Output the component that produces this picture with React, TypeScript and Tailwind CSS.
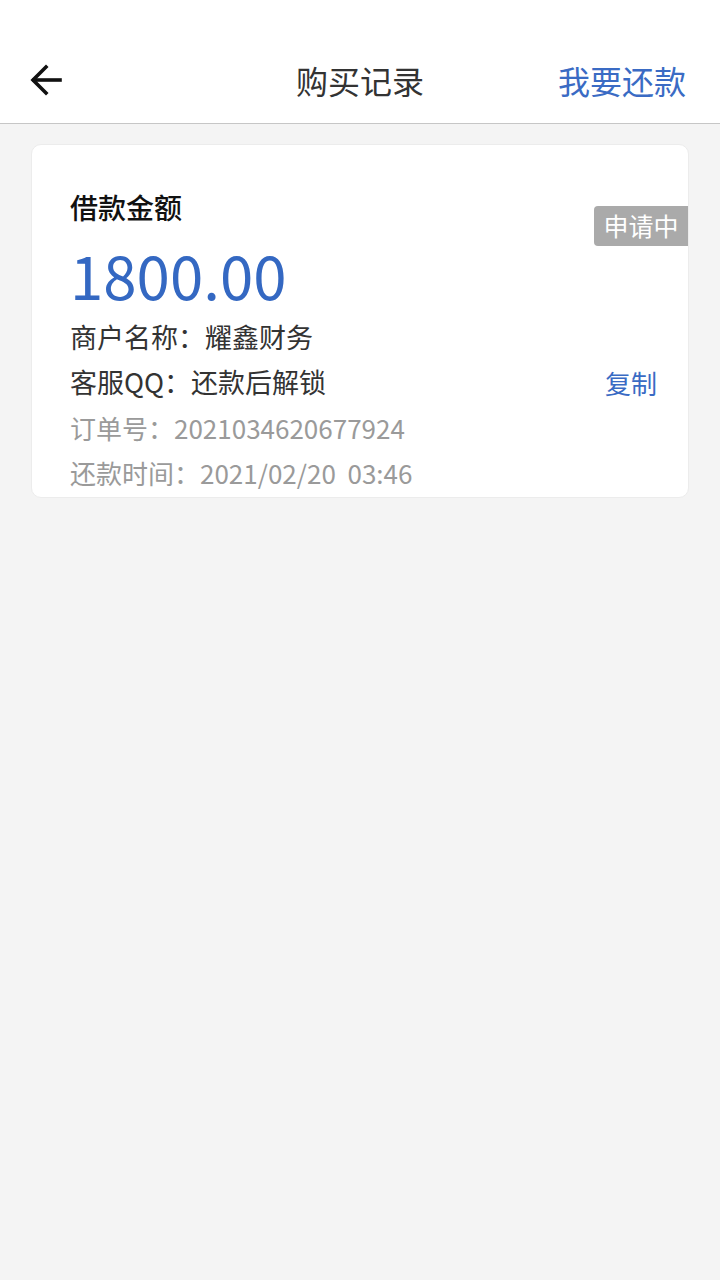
import React from "react";

const font = { fontFamily: '"Noto Sans CJK SC", "Noto Sans", sans-serif' };

const BackArrow: React.FC = () => (
  <svg width="34" height="34" viewBox="0 0 34 34" fill="none" stroke="#111" strokeWidth="3.6" strokeLinecap="square">
    <path d="M5 17 H31" />
    <path d="M17 4 L4 17 L17 30" strokeLinejoin="miter" />
  </svg>
);

const App: React.FC = () => {
  return (
    <div className="min-h-screen bg-[#f4f4f4]" style={font}>
      {/* Header */}
      <div className="h-[124px] bg-white border-b border-[#c6c6c6] pt-[44px]">
        <div className="grid h-[72px] grid-cols-[1fr_auto_1fr] items-center px-[29px]">
          <div className="flex items-center">
            <BackArrow />
          </div>
          <h1 className="text-[32px] leading-none text-[#333]">购买记录</h1>
          <div className="flex justify-end pr-[5px] text-[32px] leading-none text-[#3a6bc4]">我要还款</div>
        </div>
      </div>

      {/* Card */}
      <div className="relative mx-[31px] mt-[20px] rounded-[10px] border border-[#ececec] bg-white pl-[38px] pr-[31px] pt-[42px] pb-[2px]">
        <div className="absolute right-0 top-[61px] flex h-[40px] w-[94px] items-center justify-center rounded-l-[4px] bg-[#aaaaaa] text-[25px] text-white">
          申请中
        </div>

        <div className="flex h-[40px] items-center text-[28px] font-medium text-[#111]">借款金额</div>
        <div className="mt-[8px] flex h-[77px] items-center text-[60px] leading-none text-[#3468c2]">1800.00</div>

        <div className="mt-[3px] flex h-[45px] items-center text-[27px] text-[#333]">商户名称：耀鑫财务</div>
        <div className="flex h-[45px] items-center justify-between text-[27px] text-[#333]">
          <span>客服QQ：还款后解锁</span>
          <span className="text-[26px] text-[#3a6bc4]">复制</span>
        </div>
        <div className="flex h-[45px] items-center text-[26px] text-[#9a9a9a]">订单号：2021034620677924</div>
        <div className="flex h-[45px] items-center whitespace-pre text-[26px] text-[#9a9a9a]">还款时间：2021/02/20  03:46</div>
      </div>
    </div>
  );
};

export default App;
